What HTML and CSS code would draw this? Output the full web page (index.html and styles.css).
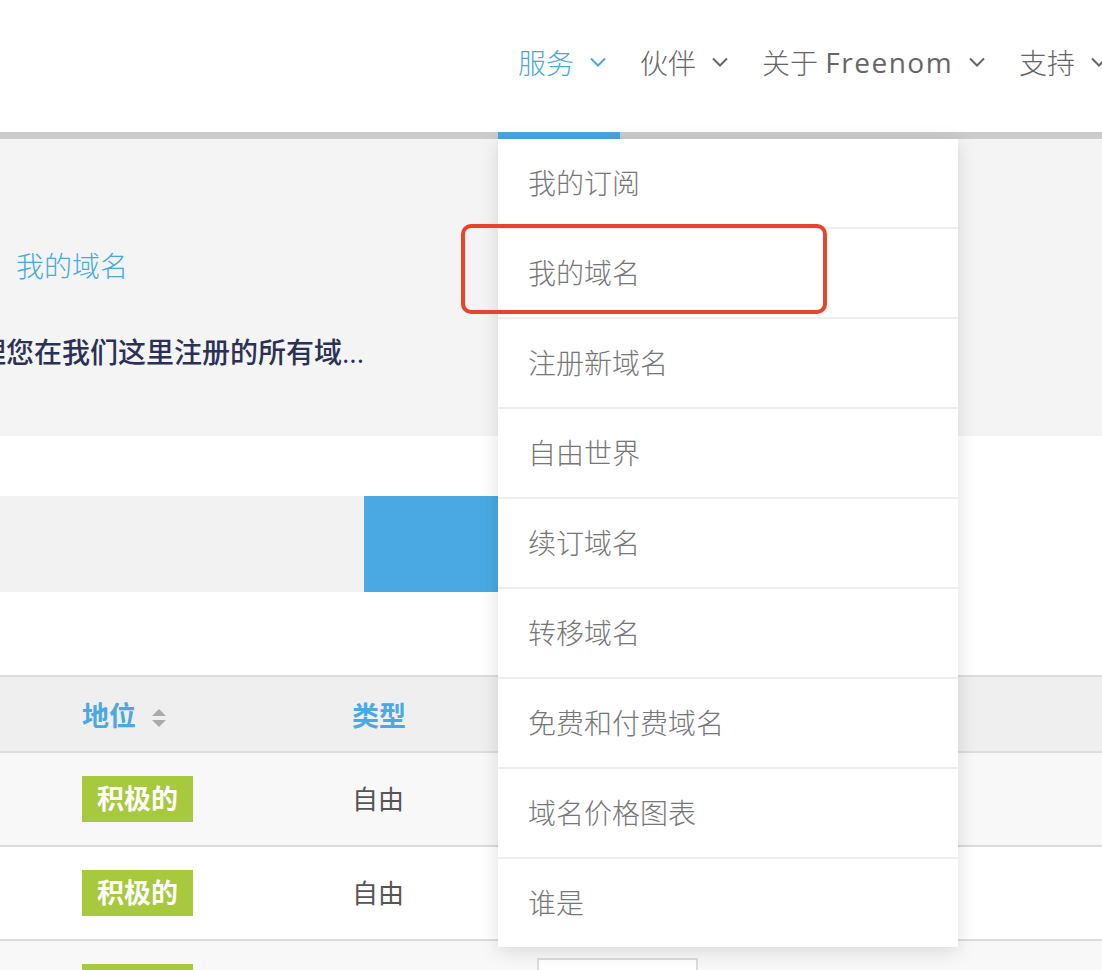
FILE: index.html
```html
<!DOCTYPE html>
<html>
<head>
  <meta charset="utf-8">
  <title>我的域名 - Freenom</title>
  <link rel="stylesheet" href="styles.css">
</head>
<body>

  <header class="header">
    <ul class="nav">
      <li class="nav-item active">服务<svg class="chev" viewBox="0 0 16 10"><polyline points="1,1.5 8,8.5 15,1.5"/></svg></li>
      <li class="nav-item">伙伴<svg class="chev" viewBox="0 0 16 10"><polyline points="1,1.5 8,8.5 15,1.5"/></svg></li>
      <li class="nav-item">关于&nbsp;<span class="brand">Freenom</span><svg class="chev" viewBox="0 0 16 10"><polyline points="1,1.5 8,8.5 15,1.5"/></svg></li>
      <li class="nav-item">支持<svg class="chev" viewBox="0 0 16 10"><polyline points="1,1.5 8,8.5 15,1.5"/></svg></li>
    </ul>
  </header>
  <div class="topbar"><div class="topbar-active"></div></div>

  <section class="hero">
    <div class="breadcrumb">我的域名</div>
    <p class="intro">管理您在我们这里注册的所有域...</p>
  </section>

  <div class="search">
    <div class="search-input"></div>
    <div class="search-button"></div>
  </div>

  <table class="domains">
    <thead>
      <tr>
        <th class="col-status">地位 <svg class="sort" viewBox="0 0 16 20"><polygon points="8,1 15,8 1,8" /><polygon points="1,12 15,12 8,19" /></svg></th>
        <th class="col-type">类型</th>
        <th></th>
      </tr>
    </thead>
    <tbody>
      <tr>
        <td class="col-status"><span class="badge">积极的</span></td>
        <td class="col-type">自由</td>
        <td><span class="manage"></span></td>
      </tr>
      <tr>
        <td class="col-status"><span class="badge">积极的</span></td>
        <td class="col-type">自由</td>
        <td><span class="manage"></span></td>
      </tr>
      <tr>
        <td class="col-status"><span class="badge">积极的</span></td>
        <td class="col-type">自由</td>
        <td><span class="manage"></span></td>
      </tr>
    </tbody>
  </table>

  <ul class="dropdown">
    <li>我的订阅</li>
    <li>我的域名</li>
    <li>注册新域名</li>
    <li>自由世界</li>
    <li>续订域名</li>
    <li>转移域名</li>
    <li>免费和付费域名</li>
    <li>域名价格图表</li>
    <li>谁是</li>
  </ul>

  <div class="highlight"></div>

</body>
</html>
```

FILE: styles.css
```css
body {
  margin: 0;
  width: 1102px;
  height: 970px;
  overflow: hidden;
  position: relative;
  font-family: "Open Sans", "Noto Sans CJK SC", sans-serif;
  background-color: #fff;
  color: #555;
}

.header {
  height: 132px;
  background-color: #fff;
}

.nav {
  display: flex;
  margin: 0;
  padding: 0 0 0 498px;
  list-style: none;
  white-space: nowrap;
}

.nav-item {
  display: flex;
  align-items: center;
  height: 124px;
  padding: 0 14px 0 20px;
  font-size: 28px;
  font-weight: 300;
  color: #666;
  flex-shrink: 0;
}

.nav-item.active {
  color: #4aa8e2;
}

.brand {
  font-weight: 400;
  letter-spacing: 1.5px;
}

.chev {
  width: 16px;
  height: 10px;
  margin-left: 16px;
  fill: none;
  stroke: currentColor;
  stroke-width: 2;
}

.topbar {
  height: 7px;
  background-color: #cbcbcb;
}

.topbar-active {
  width: 122px;
  height: 7px;
  margin-left: 498px;
  background-color: #4aa5df;
}

.hero {
  height: 297px;
  background-color: #f4f4f4;
  overflow: hidden;
}

.breadcrumb {
  margin: 106px 0 0 16px;
  font-size: 28px;
  font-weight: 300;
  color: #4aa8e2;
}

.intro {
  margin: 46px 0 0 -50px;
  font-size: 28px;
  font-weight: 500;
  color: #2a3155;
  white-space: nowrap;
}

.search {
  display: flex;
  width: 600px;
  height: 96px;
  margin-top: 60px;
}

.search-input {
  width: 364px;
  background-color: #f2f2f2;
}

.search-button {
  flex: 1;
  background-color: #4aa9e3;
}

.domains {
  width: 100%;
  margin-top: 83px;
  border-collapse: collapse;
  border-top: 2px solid #dcdcdc;
}

.domains th {
  height: 74px;
  padding: 0;
  text-align: left;
  font-size: 27px;
  font-weight: 700;
  color: #4aa8e2;
  background-color: #efefef;
  border-bottom: 2px solid #dcdcdc;
}

.domains td {
  height: 92px;
  padding: 0;
  font-size: 26px;
  line-height: 30px;
  color: #555;
  border-bottom: 2px solid #dcdcdc;
  vertical-align: middle;
}

.domains tbody tr:nth-child(odd) td {
  background-color: #f8f8f8;
}

.col-status {
  width: 270px;
  padding-left: 82px !important;
}

.col-type {
  width: 185px;
}

.sort {
  width: 16px;
  height: 20px;
  margin-left: 8px;
  vertical-align: -2px;
  fill: #aaa;
}

.badge {
  display: inline-block;
  padding: 0 15px;
  height: 46px;
  line-height: 46px;
  font-size: 27px;
  font-weight: 700;
  color: #fff;
  background-color: #a6c93d;
}

.manage {
  display: block;
  width: 157px;
  height: 54px;
  border: 2px solid #dcdcdc;
  background-color: #fff;
}

.dropdown {
  position: absolute;
  top: 139px;
  left: 498px;
  width: 460px;
  margin: 0;
  padding: 0;
  list-style: none;
  background-color: #fff;
  box-shadow: 0 4px 18px rgba(0, 0, 0, 0.13);
}

.dropdown li {
  height: 88px;
  line-height: 88px;
  padding-left: 30px;
  font-size: 28px;
  font-weight: 300;
  color: #777;
  border-bottom: 2px solid #eee;
}

.dropdown li:last-child {
  border-bottom: none;
}

.highlight {
  position: absolute;
  top: 224px;
  left: 461px;
  width: 358px;
  height: 82px;
  border: 4px solid #e8442b;
  border-radius: 10px;
}
```
